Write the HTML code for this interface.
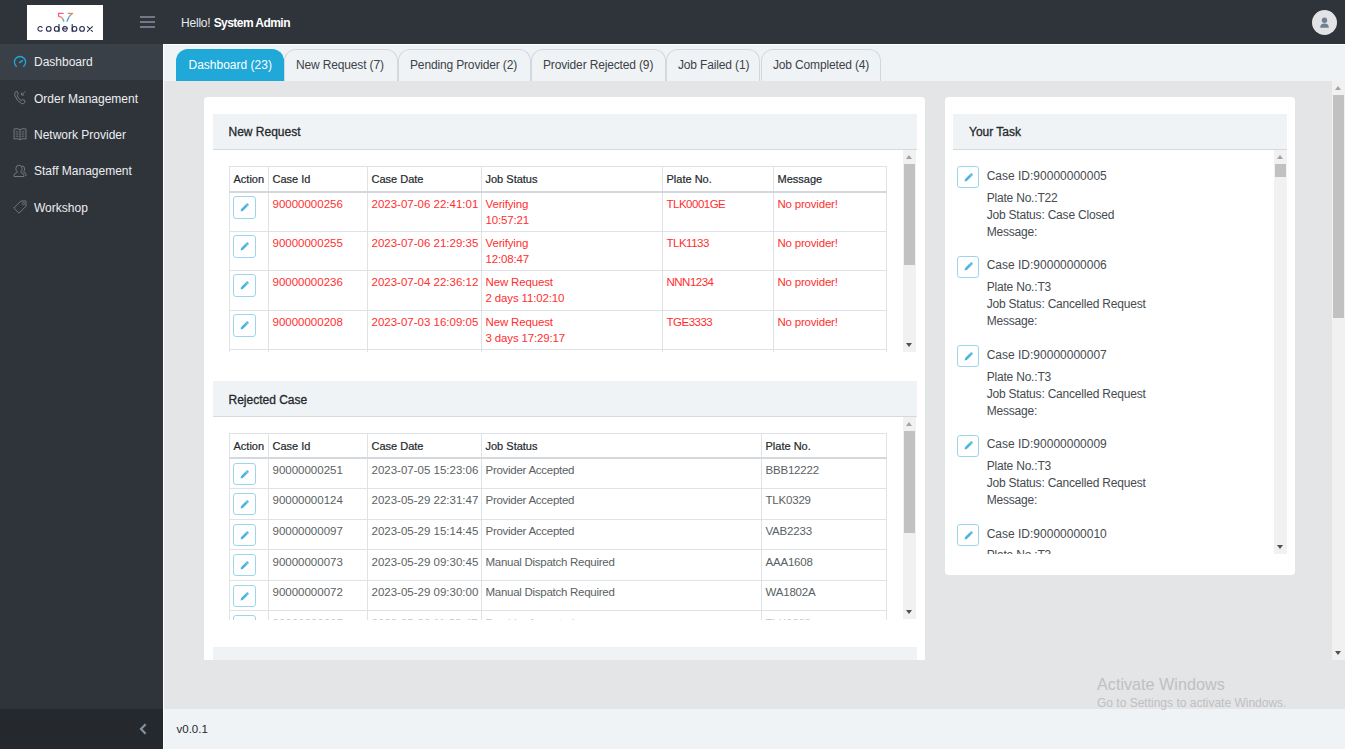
<!DOCTYPE html>
<html><head><meta charset="utf-8">
<style>
*{box-sizing:border-box;margin:0;padding:0}
html,body{width:1345px;height:749px;overflow:hidden;background:#e4e5e6;font-family:"Liberation Sans",sans-serif;font-size:12px;color:#23282c}
.a{position:absolute}
#hdr{left:0;top:0;width:1345px;height:44px;background:#2f343b}
#logo{left:27px;top:5px;width:76px;height:35px;background:#fff}
.hb{left:140px;width:15px;height:2px;background:#6f7a86}
#hello{left:181px;top:14.8px;letter-spacing:-0.2px;line-height:16px;font-size:12px;color:#e8eaec;white-space:nowrap}
#hello b{color:#fff;letter-spacing:-0.55px}
#avatar{left:1312px;top:9.5px;width:25px;height:25px;border-radius:50%;background:#e2e3e5}
#side{left:0;top:44px;width:163px;height:665px;background:#2f343b}
#sidefoot{left:0;top:709px;width:163px;height:40px;background:#25292d}
.nav{left:0;width:163px;height:36.4px;color:#eceef0;font-size:12px;line-height:16px}
.nav span{position:absolute;left:34px;top:10.3px;white-space:nowrap}
.nav svg{position:absolute;left:13px;top:10px}
#vline{left:163px;top:44px;width:1px;height:705px;background:#fff}
#tabs{left:164px;top:44px;width:1181px;height:37px;background:#f0f3f5;border-top:1px solid #fff}
.tab{top:48.5px;height:32.5px;letter-spacing:-0.15px;border:1px solid #d3d8dc;border-bottom:0;border-radius:12px 12px 0 0;background:#f0f3f5;color:#3c4248;line-height:16px;padding-left:11px;padding-top:7.3px;white-space:nowrap;font-size:12px}
.tab.act{background:#20a8d8;border-color:#20a8d8;color:#fff;letter-spacing:0;padding-left:11.5px}
#foot{left:164px;top:709px;width:1181px;height:40px;background:#f0f3f5}
.card{background:#fff;border-radius:4px}
.ch{background:#f0f3f5;border-bottom:1px solid #d5dade;line-height:16px}
.ch span{position:absolute;left:16px;top:10.5px;font-weight:normal;-webkit-text-stroke:0.3px #23282c;color:#23282c;white-space:nowrap}
.sb{background:#f1f1f1}
.thumb{background:#c1c1c1}
.up,.dn{width:0;height:0;border-left:3.5px solid transparent;border-right:3.5px solid transparent}
.up{border-bottom:4px solid #a3a3a3}
.dn{border-top:4px solid #505050}
table{border-collapse:collapse;table-layout:fixed;font-size:11px;line-height:16px}
td,th{border:1px solid #dfe3e7;padding:0 0 0 4px;vertical-align:top;text-align:left;white-space:nowrap;overflow:hidden}
th{font-weight:normal;color:#23282c;border-bottom:2px solid #d3d8dd;-webkit-text-stroke:0.2px #23282c;height:25px;padding-top:3.5px}
.red td{color:#ff2f2f}
.btn{display:block;width:23px;height:23px;border:1px solid #9bd6ec;border-radius:3px;position:relative}
.btn svg{position:absolute;left:-1px;top:-1px}
.task{width:300px;height:85px;color:#464b50}
.task .btn{position:absolute;left:4px;top:0;width:22px;height:22px}
.task .btn svg{left:-1.5px;top:-1.5px}
.tl{position:absolute;left:33.7px;top:1.5px;line-height:16px;white-space:nowrap}
.tp{position:absolute;left:33.7px;top:23.4px;line-height:17px;white-space:nowrap;letter-spacing:-0.2px}
tr.r1 td{height:39.6px;padding-top:3.2px;font-size:11.5px}
tr.r1 td .btn{margin-top:0;margin-left:-1px}
tr.r2 td .btn{margin-left:-1px}
tr.r2 td{height:30.6px;padding-top:3.3px;font-size:11.5px;color:#5a5f64}
tr.r2 td:first-child{padding-top:4px}
tr.r2 .btn{height:22px}
#t2 th{height:24.5px;padding-top:4px}
tr.r1 td:nth-child(4){letter-spacing:-0.15px}
tr.r1 td:nth-child(5){letter-spacing:-0.5px}
tr.r1 td:nth-child(6){letter-spacing:-0.2px}
tr.r2 td:nth-child(4){letter-spacing:-0.27px}
tr.r2 td:nth-child(5){letter-spacing:-0.2px}
#t2 tr:nth-child(7) td{color:#c4c7ca}
</style></head><body>
<div id="hdr" class="a"></div>
<div id="logo" class="a"><svg class="a" style="left:0;top:0" width="76" height="35" viewBox="0 0 76 35">
<defs><linearGradient id="g1" gradientUnits="userSpaceOnUse" x1="31" y1="8" x2="37" y2="16.5"><stop offset="0" stop-color="#ff3fa4"/><stop offset="0.55" stop-color="#ff8a5c"/><stop offset="1" stop-color="#18a8ff"/></linearGradient>
<linearGradient id="g2" gradientUnits="userSpaceOnUse" x1="46" y1="8" x2="40" y2="16.5"><stop offset="0" stop-color="#ff8a4c"/><stop offset="0.5" stop-color="#7aa3b0"/><stop offset="1" stop-color="#16a6ff"/></linearGradient></defs>
<path d="M36.3 8.3 L31.6 8.3 L31.6 11.3 Q34.8 11.6 36 14.3 L36.8 16.2" fill="none" stroke="url(#g1)" stroke-width="1.3" stroke-linecap="round" stroke-linejoin="round"/>
<path d="M41.2 8.3 L45.7 8.3 Q41.6 11 40.1 16.2" fill="none" stroke="url(#g2)" stroke-width="1.3" stroke-linecap="round" stroke-linejoin="round"/>
<path d="M15.10 22.39 A2.35 2.35 0 1 0 15.10 25.41" fill="none" stroke="#282c50" stroke-width="1.1" stroke-linecap="round"/>
<circle cx="21.75" cy="23.9" r="2.35" fill="none" stroke="#282c50" stroke-width="1.1"/>
<circle cx="29.7" cy="23.9" r="2.35" fill="none" stroke="#282c50" stroke-width="1.1"/>
<path d="M32.0 19.5 L32.0 26.6" stroke="#282c50" stroke-width="1.1" stroke-linecap="round"/>
<path d="M40.35 23.90 A2.35 2.35 0 1 0 39.66 25.56" fill="none" stroke="#282c50" stroke-width="1.1" stroke-linecap="round"/>
<path d="M35.65 23.9 L40.35 23.9" stroke="#282c50" stroke-width="1.1"/>
<circle cx="47.5" cy="23.9" r="2.35" fill="none" stroke="#282c50" stroke-width="1.1"/>
<path d="M45.2 19.5 L45.2 26.6" stroke="#282c50" stroke-width="1.1" stroke-linecap="round"/>
<circle cx="55.05" cy="23.9" r="2.35" fill="none" stroke="#282c50" stroke-width="1.1"/>
<path d="M60.4 21.6 L65.4 26.4 M65.4 21.6 L60.4 26.4" stroke="#282c50" stroke-width="1.1" stroke-linecap="round"/></svg></div>
<div class="a hb" style="top:16px"></div>
<div class="a hb" style="top:21px"></div>
<div class="a hb" style="top:26px"></div>
<div id="hello" class="a">Hello! <b>System Admin</b></div>
<div id="avatar" class="a"><svg class="a" style="left:0;top:0" width="25" height="25" viewBox="0 0 25 25"><circle cx="12.5" cy="10.2" r="2.7" fill="#6f8191"/><path d="M8.2 17.8 Q8.2 13.6 12.5 13.6 Q16.8 13.6 16.8 17.8 Z" fill="#6f8191"/></svg></div>

<div id="side" class="a"></div>
<div class="a nav" style="top:44px;background:#3a4047"><svg style="left:13px;top:11px" width="14" height="14" viewBox="0 0 14 14"><path d="M3.3 11.3 A5.6 5.6 0 1 1 10.7 11.3" fill="none" stroke="#20a8d8" stroke-width="1.3" stroke-linecap="round"/><path d="M6.6 7.6 L9.4 5.6" stroke="#20a8d8" stroke-width="1.4" stroke-linecap="round"/></svg><span>Dashboard</span></div>
<div class="a nav" style="top:80.4px"><svg style="left:13px;top:10px" width="14" height="16" viewBox="0 0 14 16"><path d="M2.6 1.8 L4.4 1.6 L5.3 4.3 L4.1 5.4 Q5.2 8.6 8 10.6 L9.3 9.5 L11.9 10.6 L11.7 12.7 Q10.6 14.2 8.6 13.6 Q3.9 11.3 1.8 5.4 Q1.4 3.3 2.6 1.8 Z" fill="none" stroke="#707a84" stroke-width="1"/><path d="M12.2 1.4 L8.6 5 M8.6 2.5 L8.6 5 L11.1 5" fill="none" stroke="#707a84" stroke-width="1"/></svg><span>Order Management</span></div>
<div class="a nav" style="top:116.8px"><svg style="left:13px;top:10.5px" width="14" height="14" viewBox="0 0 14 14"><path d="M1 2 Q4 1 7 2.6 Q10 1 13 2 L13 12 Q10 11 7 12.6 Q4 11 1 12 Z M7 2.6 L7 12.6" fill="none" stroke="#6c7883" stroke-width="1"/><path d="M2.6 4.6 L5.4 5 M2.6 6.8 L5.4 7.2 M2.6 9 L5.4 9.4 M8.6 5 L11.4 4.6 M8.6 7.2 L11.4 6.8 M8.6 9.4 L11.4 9" stroke="#6c7883" stroke-width="0.9"/></svg><span>Network Provider</span></div>
<div class="a nav" style="top:153.2px"><svg style="left:13px;top:10.8px" width="14" height="14" viewBox="0 0 14 14"><path d="M1 12.5 L1 11.2 Q1.2 9.4 3.6 8.8 L4.3 8 Q2.8 6.8 2.9 4.2 Q3.1 1.2 6 1.2 Q8.9 1.2 9.1 4.2 Q9.2 6.8 7.7 8 L8.4 8.8 Q10.8 9.4 11 11.2 L11 12.5 Z" fill="none" stroke="#6c7883" stroke-width="1"/><path d="M9 1.8 Q11.8 2.2 11.7 5 Q11.6 7 10.5 8 Q12.8 8.8 13 10.6 L13 12" fill="none" stroke="#6c7883" stroke-width="1"/></svg><span>Staff Management</span></div>
<div class="a nav" style="top:189.6px"><svg style="left:13px;top:10.4px" width="14" height="14" viewBox="0 0 14 14"><path d="M7.8 1 L13 1 L13 6.2 L6 13.2 L0.8 8 Z" fill="none" stroke="#6c7883" stroke-width="1" stroke-linejoin="round"/><circle cx="10.4" cy="3.6" r="1.1" fill="none" stroke="#6c7883" stroke-width="0.9"/></svg><span>Workshop</span></div>
<div id="sidefoot" class="a"><svg class="a" style="left:137px;top:13px" width="12" height="14" viewBox="0 0 12 14"><path d="M8.6 2.2 L4 7 L8.6 11.8" fill="none" stroke="#8391a0" stroke-width="2.2"/></svg></div>
<div id="vline" class="a"></div>

<div id="tabs" class="a"></div>
<div class="a tab act" style="left:176px;width:108px">Dashboard (23)</div>
<div class="a tab" style="left:284px;width:114px">New Request (7)</div>
<div class="a tab" style="left:398px;width:133px">Pending Provider (2)</div>
<div class="a tab" style="left:531px;width:135px">Provider Rejected (9)</div>
<div class="a tab" style="left:666px;width:94px">Job Failed (1)</div>
<div class="a tab" style="left:761px;width:120px">Job Completed (4)</div>

<div id="foot" class="a"><div class="a" style="left:12.5px;top:11.5px;line-height:16px;font-size:11.5px;color:#23282c">v0.0.1</div></div>
<div class="a" style="left:1097px;top:674px;font-size:16.2px;line-height:20px;color:#bfc0c1;white-space:nowrap">Activate Windows</div>
<div class="a" style="left:1097px;top:695px;font-size:12px;line-height:16px;color:#bfc0c1;white-space:nowrap">Go to Settings to activate Windows.</div>
<!--CARDS-->
<div class="a card" style="left:204px;top:97px;width:720.5px;height:563px;overflow:hidden;border-radius:4px 4px 0 0">
<div class="a ch" style="left:8.5px;top:16.5px;width:704px;height:36.5px"><span>New Request</span></div>
<div class="a" style="left:8.5px;top:53px;width:691px;height:202px;overflow:hidden">
<table id="t1" class="a red" style="left:16px;top:16px;width:657.5px">
<colgroup><col style="width:39px"><col style="width:99px"><col style="width:114px"><col style="width:181px"><col style="width:111px"><col style="width:113.5px"></colgroup>
<tr><th>Action</th><th>Case Id</th><th>Case Date</th><th>Job Status</th><th>Plate No.</th><th>Message</th></tr>
<tr class="r1"><td><span class="btn"><svg width="23" height="23" viewBox="0 0 23 23"><path d="M7.6 15.4 L8.1 13.1 L13.6 7.6 Q14.5 6.9 15.3 7.7 Q16.0 8.5 15.4 9.4 L9.9 14.9 Z" fill="#4cb6de"/><path d="M12.7 8.2 L14.9 10.4" stroke="#fff" stroke-width="0.5" opacity="0.8"/></svg></span></td><td>90000000256</td><td>2023-07-06 22:41:01</td><td>Verifying<br>10:57:21</td><td>TLK0001GE</td><td>No provider!</td></tr>
<tr class="r1"><td><span class="btn"><svg width="23" height="23" viewBox="0 0 23 23"><path d="M7.6 15.4 L8.1 13.1 L13.6 7.6 Q14.5 6.9 15.3 7.7 Q16.0 8.5 15.4 9.4 L9.9 14.9 Z" fill="#4cb6de"/><path d="M12.7 8.2 L14.9 10.4" stroke="#fff" stroke-width="0.5" opacity="0.8"/></svg></span></td><td>90000000255</td><td>2023-07-06 21:29:35</td><td>Verifying<br>12:08:47</td><td>TLK1133</td><td>No provider!</td></tr>
<tr class="r1"><td><span class="btn"><svg width="23" height="23" viewBox="0 0 23 23"><path d="M7.6 15.4 L8.1 13.1 L13.6 7.6 Q14.5 6.9 15.3 7.7 Q16.0 8.5 15.4 9.4 L9.9 14.9 Z" fill="#4cb6de"/><path d="M12.7 8.2 L14.9 10.4" stroke="#fff" stroke-width="0.5" opacity="0.8"/></svg></span></td><td>90000000236</td><td>2023-07-04 22:36:12</td><td>New Request<br>2 days 11:02:10</td><td>NNN1234</td><td>No provider!</td></tr>
<tr class="r1"><td><span class="btn"><svg width="23" height="23" viewBox="0 0 23 23"><path d="M7.6 15.4 L8.1 13.1 L13.6 7.6 Q14.5 6.9 15.3 7.7 Q16.0 8.5 15.4 9.4 L9.9 14.9 Z" fill="#4cb6de"/><path d="M12.7 8.2 L14.9 10.4" stroke="#fff" stroke-width="0.5" opacity="0.8"/></svg></span></td><td>90000000208</td><td>2023-07-03 16:09:05</td><td>New Request<br>3 days 17:29:17</td><td>TGE3333</td><td>No provider!</td></tr>
<tr class="r1"><td><span class="btn"><svg width="23" height="23" viewBox="0 0 23 23"><path d="M7.6 15.4 L8.1 13.1 L13.6 7.6 Q14.5 6.9 15.3 7.7 Q16.0 8.5 15.4 9.4 L9.9 14.9 Z" fill="#4cb6de"/><path d="M12.7 8.2 L14.9 10.4" stroke="#fff" stroke-width="0.5" opacity="0.8"/></svg></span></td><td>90000000207</td><td>2023-07-03 16:00:05</td><td>New Request<br>3 days 17:38:17</td><td>TGE3332</td><td>No provider!</td></tr>
</table></div>
<div class="a sb" style="left:699px;top:53px;width:13px;height:202px"><div class="a up" style="left:3px;top:5px"></div><div class="a thumb" style="left:1px;top:14px;width:11px;height:101px"></div><div class="a dn" style="left:3px;top:193px"></div></div>
<div class="a ch" style="left:8.5px;top:284px;width:704px;height:36px"><span>Rejected Case</span></div>
<div class="a" style="left:8.5px;top:320px;width:691px;height:203px;overflow:hidden">
<table id="t2" class="a" style="left:16px;top:16px;width:657px">
<colgroup><col style="width:39px"><col style="width:99px"><col style="width:114px"><col style="width:280px"><col style="width:125px"></colgroup>
<tr><th>Action</th><th>Case Id</th><th>Case Date</th><th>Job Status</th><th>Plate No.</th></tr>
<tr class="r2"><td><span class="btn"><svg width="23" height="23" viewBox="0 0 23 23"><path d="M7.6 15.4 L8.1 13.1 L13.6 7.6 Q14.5 6.9 15.3 7.7 Q16.0 8.5 15.4 9.4 L9.9 14.9 Z" fill="#4cb6de"/><path d="M12.7 8.2 L14.9 10.4" stroke="#fff" stroke-width="0.5" opacity="0.8"/></svg></span></td><td>90000000251</td><td>2023-07-05 15:23:06</td><td>Provider Accepted</td><td>BBB12222</td></tr>
<tr class="r2"><td><span class="btn"><svg width="23" height="23" viewBox="0 0 23 23"><path d="M7.6 15.4 L8.1 13.1 L13.6 7.6 Q14.5 6.9 15.3 7.7 Q16.0 8.5 15.4 9.4 L9.9 14.9 Z" fill="#4cb6de"/><path d="M12.7 8.2 L14.9 10.4" stroke="#fff" stroke-width="0.5" opacity="0.8"/></svg></span></td><td>90000000124</td><td>2023-05-29 22:31:47</td><td>Provider Accepted</td><td>TLK0329</td></tr>
<tr class="r2"><td><span class="btn"><svg width="23" height="23" viewBox="0 0 23 23"><path d="M7.6 15.4 L8.1 13.1 L13.6 7.6 Q14.5 6.9 15.3 7.7 Q16.0 8.5 15.4 9.4 L9.9 14.9 Z" fill="#4cb6de"/><path d="M12.7 8.2 L14.9 10.4" stroke="#fff" stroke-width="0.5" opacity="0.8"/></svg></span></td><td>90000000097</td><td>2023-05-29 15:14:45</td><td>Provider Accepted</td><td>VAB2233</td></tr>
<tr class="r2"><td><span class="btn"><svg width="23" height="23" viewBox="0 0 23 23"><path d="M7.6 15.4 L8.1 13.1 L13.6 7.6 Q14.5 6.9 15.3 7.7 Q16.0 8.5 15.4 9.4 L9.9 14.9 Z" fill="#4cb6de"/><path d="M12.7 8.2 L14.9 10.4" stroke="#fff" stroke-width="0.5" opacity="0.8"/></svg></span></td><td>90000000073</td><td>2023-05-29 09:30:45</td><td>Manual Dispatch Required</td><td>AAA1608</td></tr>
<tr class="r2"><td><span class="btn"><svg width="23" height="23" viewBox="0 0 23 23"><path d="M7.6 15.4 L8.1 13.1 L13.6 7.6 Q14.5 6.9 15.3 7.7 Q16.0 8.5 15.4 9.4 L9.9 14.9 Z" fill="#4cb6de"/><path d="M12.7 8.2 L14.9 10.4" stroke="#fff" stroke-width="0.5" opacity="0.8"/></svg></span></td><td>90000000072</td><td>2023-05-29 09:30:00</td><td>Manual Dispatch Required</td><td>WA1802A</td></tr>
<tr class="r2"><td><span class="btn"><svg width="23" height="23" viewBox="0 0 23 23"><path d="M7.6 15.4 L8.1 13.1 L13.6 7.6 Q14.5 6.9 15.3 7.7 Q16.0 8.5 15.4 9.4 L9.9 14.9 Z" fill="#4cb6de"/><path d="M12.7 8.2 L14.9 10.4" stroke="#fff" stroke-width="0.5" opacity="0.8"/></svg></span></td><td>90000000067</td><td>2023-05-26 11:53:47</td><td>Provider Accepted</td><td>TLK0328</td></tr>
</table></div>
<div class="a sb" style="left:699px;top:320px;width:13px;height:202px"><div class="a up" style="left:3px;top:5px"></div><div class="a thumb" style="left:1px;top:14px;width:11px;height:102px"></div><div class="a dn" style="left:3px;top:193px"></div></div>
<div class="a ch" style="left:8.5px;top:550px;width:704px;height:36px"></div>
</div>
<div class="a card" style="left:945px;top:97px;width:350px;height:477.7px;overflow:hidden">
<div class="a ch" style="left:8px;top:16.5px;width:334px;height:36.5px"><span>Your Task</span></div>
<div class="a" style="left:8px;top:53px;width:321px;height:404px;overflow:hidden">
<div class="a task" style="left:0;top:16.30px"><span class="btn"><svg width="23" height="23" viewBox="0 0 23 23"><path d="M7.6 15.4 L8.1 13.1 L13.6 7.6 Q14.5 6.9 15.3 7.7 Q16.0 8.5 15.4 9.4 L9.9 14.9 Z" fill="#4cb6de"/><path d="M12.7 8.2 L14.9 10.4" stroke="#fff" stroke-width="0.5" opacity="0.8"/></svg></span><div class="tl">Case ID:90000000005</div><div class="tp">Plate No.:T22<br>Job Status: Case Closed<br>Message:</div></div>
<div class="a task" style="left:0;top:105.75px"><span class="btn"><svg width="23" height="23" viewBox="0 0 23 23"><path d="M7.6 15.4 L8.1 13.1 L13.6 7.6 Q14.5 6.9 15.3 7.7 Q16.0 8.5 15.4 9.4 L9.9 14.9 Z" fill="#4cb6de"/><path d="M12.7 8.2 L14.9 10.4" stroke="#fff" stroke-width="0.5" opacity="0.8"/></svg></span><div class="tl">Case ID:90000000006</div><div class="tp">Plate No.:T3<br>Job Status: Cancelled Request<br>Message:</div></div>
<div class="a task" style="left:0;top:195.20px"><span class="btn"><svg width="23" height="23" viewBox="0 0 23 23"><path d="M7.6 15.4 L8.1 13.1 L13.6 7.6 Q14.5 6.9 15.3 7.7 Q16.0 8.5 15.4 9.4 L9.9 14.9 Z" fill="#4cb6de"/><path d="M12.7 8.2 L14.9 10.4" stroke="#fff" stroke-width="0.5" opacity="0.8"/></svg></span><div class="tl">Case ID:90000000007</div><div class="tp">Plate No.:T3<br>Job Status: Cancelled Request<br>Message:</div></div>
<div class="a task" style="left:0;top:284.65px"><span class="btn"><svg width="23" height="23" viewBox="0 0 23 23"><path d="M7.6 15.4 L8.1 13.1 L13.6 7.6 Q14.5 6.9 15.3 7.7 Q16.0 8.5 15.4 9.4 L9.9 14.9 Z" fill="#4cb6de"/><path d="M12.7 8.2 L14.9 10.4" stroke="#fff" stroke-width="0.5" opacity="0.8"/></svg></span><div class="tl">Case ID:90000000009</div><div class="tp">Plate No.:T3<br>Job Status: Cancelled Request<br>Message:</div></div>
<div class="a task" style="left:0;top:374.10px"><span class="btn"><svg width="23" height="23" viewBox="0 0 23 23"><path d="M7.6 15.4 L8.1 13.1 L13.6 7.6 Q14.5 6.9 15.3 7.7 Q16.0 8.5 15.4 9.4 L9.9 14.9 Z" fill="#4cb6de"/><path d="M12.7 8.2 L14.9 10.4" stroke="#fff" stroke-width="0.5" opacity="0.8"/></svg></span><div class="tl">Case ID:90000000010</div><div class="tp">Plate No.:T3<br>Job Status: Cancelled Request<br>Message:</div></div>
</div>
<div class="a sb" style="left:329px;top:53px;width:13px;height:404px"><div class="a up" style="left:3px;top:5px"></div><div class="a thumb" style="left:1px;top:14px;width:11px;height:13px"></div><div class="a dn" style="left:3px;top:395px"></div></div>
</div>
<div class="a sb" style="left:1332px;top:81px;width:13px;height:579px"><div class="a up" style="left:3px;top:5px"></div><div class="a thumb" style="left:1px;top:14px;width:11px;height:223px"></div><div class="a dn" style="left:3px;top:570px"></div></div>
<!--/CARDS-->
</body></html>
